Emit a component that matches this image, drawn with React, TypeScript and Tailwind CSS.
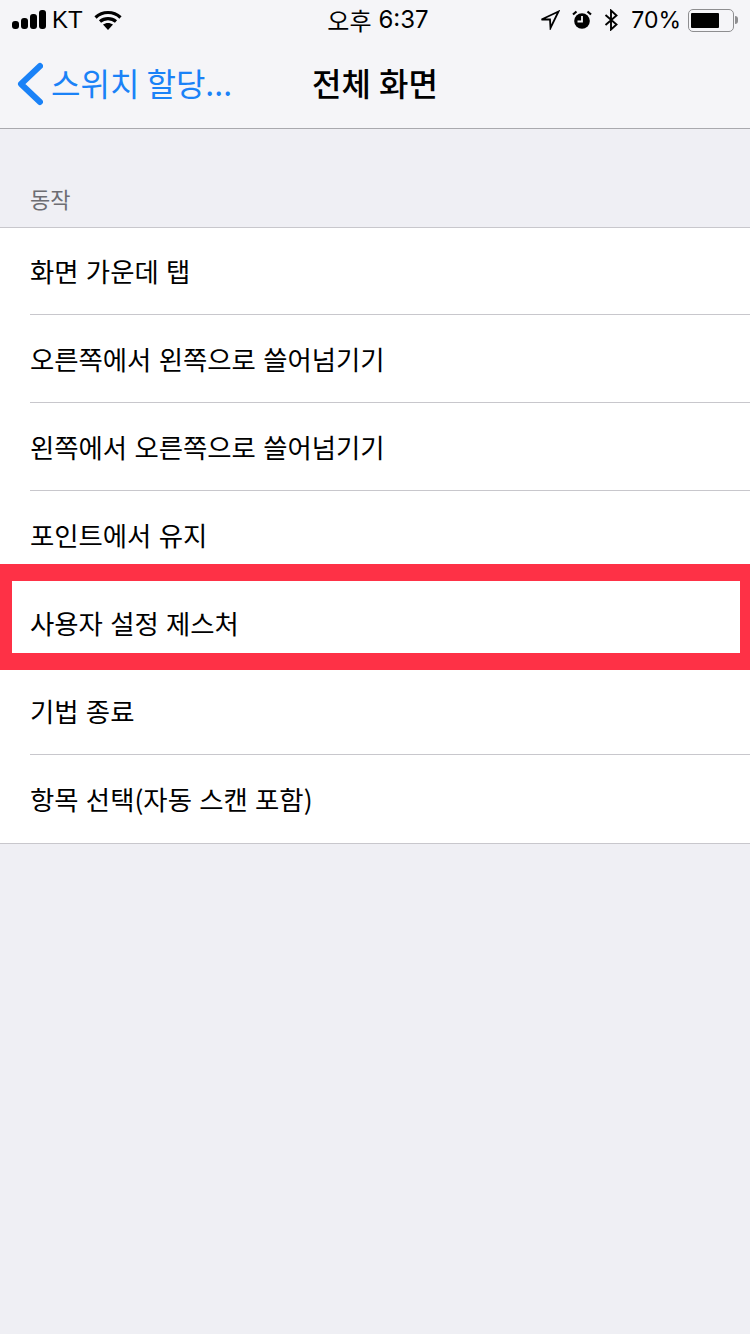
import React from "react";

const FONT = "font-['Noto_Sans_CJK_KR','Liberation_Sans',sans-serif]";

const ROWS = [
  "화면 가운데 탭",
  "오른쪽에서 왼쪽으로 쓸어넘기기",
  "왼쪽에서 오른쪽으로 쓸어넘기기",
  "포인트에서 유지",
  "사용자 설정 제스처",
  "기법 종료",
  "항목 선택(자동 스캔 포함)",
];

function SignalBars() {
  return (
    <svg width="34" height="20" viewBox="0 0 34 20" fill="#000">
      <rect x="0" y="11" width="7" height="8" rx="3" />
      <rect x="9" y="8" width="7" height="11" rx="3" />
      <rect x="18" y="4" width="7" height="15" rx="3" />
      <rect x="27" y="0" width="7" height="19" rx="3" />
    </svg>
  );
}

function Wifi() {
  return (
    <svg width="28" height="20" viewBox="0 0 28 20" fill="none" stroke="#000" strokeWidth="3.2">
      <path d="M1.500 7.500C8.500 .8 19.500 .8 26.500 7.500" />
      <path d="M6 11.500C10.500 7.600 17.500 7.600 22 11.500" />
      <path d="M14 20l-5-5.400c2.800-2.200 7.200-2.200 10 0z" fill="#000" stroke="none" />
    </svg>
  );
}

function LocationArrow() {
  return (
    <svg width="20" height="20" viewBox="0 0 20 20" fill="none" stroke="#000" strokeWidth="1.8">
      <path d="M18.500 1.500L1.500 9.500h8.500l0.500 8.500z" />
    </svg>
  );
}

function Alarm() {
  return (
    <svg width="20" height="20" viewBox="0 0 20 20">
      <circle cx="10" cy="11" r="7.800" fill="#000" />
      <path d="M10 6v5.500H5.500" fill="none" stroke="#f5f5f8" strokeWidth="1.800" />
      <path d="M1 4.500L4.500 1.500M19 4.500L15.500 1.500" stroke="#000" strokeWidth="2.200" />
    </svg>
  );
}

function Bluetooth() {
  return (
    <svg width="14" height="22" viewBox="0 0 14 22" fill="none" stroke="#000" strokeWidth="1.900">
      <path d="M1.500 6l11 9.500L7 20.500v-19l5.500 5L1.500 16" />
    </svg>
  );
}

function Battery() {
  return (
    <div className="flex items-center gap-[1px]">
      <div className="flex h-[23px] w-[46px] items-center rounded-[5px] border-[1.5px] border-[#8e8e90] px-[2px]">
        <div className="h-[15px] w-[28px] rounded-[1px] bg-black" />
      </div>
      <div className="h-[8px] w-[3px] rounded-r-sm bg-[#8e8e90]" />
    </div>
  );
}

function StatusBar() {
  return (
    <div className="relative flex h-[40px] items-center justify-between pl-[12px] pr-[12px] text-[24px] text-black">
      <div className="flex items-center">
        <SignalBars />
        <span className="ml-[6px] font-['Liberation_Sans'] leading-none">KT</span>
        <div className="ml-[11px]">
          <Wifi />
        </div>
      </div>
      <div className="absolute inset-x-0 top-0 flex h-[40px] items-center justify-center gap-[7px] pl-[6px] text-[24px] leading-none">
        <span className={FONT}>오후</span>
        <span className="font-['Inter']">6:37</span>
      </div>
      <div className="flex items-center">
        <LocationArrow />
        <div className="ml-[12px]">
          <Alarm />
        </div>
        <div className="ml-[12px]">
          <Bluetooth />
        </div>
        <span className="ml-[13px] mr-[7px] font-['Inter'] text-[23px] leading-none">70%</span>
        <Battery />
      </div>
    </div>
  );
}

function NavBar() {
  return (
    <div className="relative flex h-[89px] items-center border-b border-[#a9a9ae]">
      <svg width="28" height="44" viewBox="0 0 28 44" fill="none" stroke="#1a82f7" strokeWidth="6" strokeLinecap="round" strokeLinejoin="round" className="ml-[15px] mt-[-1px]">
        <path d="M25 4L6 22l19 18" />
      </svg>
      <span className={`mb-[5px] ml-[8px] text-[32px] leading-none text-[#1a82f7] ${FONT}`}>스위치 할당...</span>
      <div className="absolute inset-0 flex items-center justify-center">
        <span className={`mb-[5px] text-[32px] font-medium leading-none [word-spacing:1px] text-black ${FONT}`}>전체 화면</span>
      </div>
    </div>
  );
}

export default function App() {
  return (
    <div className={`flex min-h-screen flex-col bg-[#efeff4] ${FONT}`}>
      <div className="bg-[#f5f5f8]">
        <StatusBar />
        <NavBar />
      </div>

      <div className="flex h-[98px] items-end pb-[18px] pl-[30px] text-[22px] leading-none text-[#6d6d72]">동작</div>

      <div className="relative border-y border-[#c8c7cc] bg-white">
        {ROWS.map((label, i) => (
          <div key={label} className="flex h-[88px] pl-[30px] first:h-[87px] last:h-[87px]">
            <div className={`flex flex-1 items-center text-[26.4px] leading-none [word-spacing:1.4px] text-black ${i < ROWS.length - 1 ? "border-b border-[#c8c7cc]" : ""}`}>
              <span className="mt-[1px]">{label}</span>
            </div>
          </div>
        ))}

        {/* 빨간 강조 박스 */}
        <div className="pointer-events-none absolute left-0 right-0 top-[336px] h-[106px] border-y-[17px] border-l-[12px] border-r-[10px] border-[#fe3146]" />
      </div>
    </div>
  );
}
